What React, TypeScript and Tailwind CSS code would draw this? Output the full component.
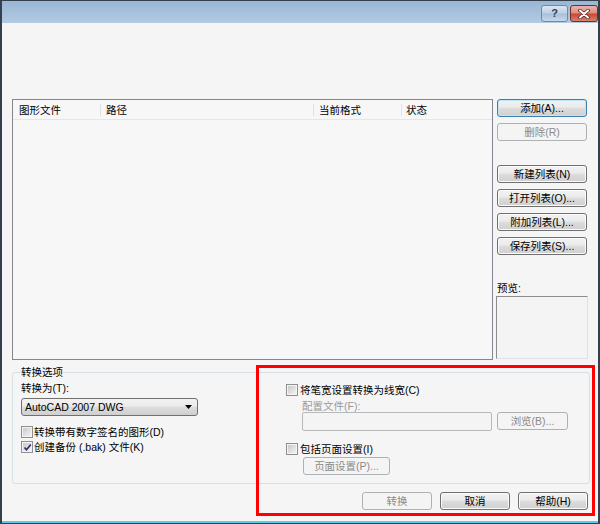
import React from "react";

const btnBase =
  "h-[18px] flex items-center justify-center rounded-[3px] border text-[10.5px] leading-none shrink-0";
const btnOn =
  "border-[#707070] text-black bg-[linear-gradient(#f2f2f2_0%,#ebebeb_45%,#dddddd_50%,#cfcfcf_100%)] shadow-[inset_0_0_0_1px_#fbfbfb]";
const btnDef =
  "border-[#3c7fb1] text-black bg-[linear-gradient(#f2f2f2_0%,#ebebeb_45%,#dddddd_50%,#cfcfcf_100%)] shadow-[inset_0_0_0_1px_#bfe6f7]";
const btnOff = "border-[#adb2b5] text-[#8a8a8a] bg-[#f4f4f4]";

function Btn({
  children,
  kind = "on",
  className = "",
}: {
  children: React.ReactNode;
  kind?: "on" | "def" | "off";
  className?: string;
}) {
  const k = kind === "on" ? btnOn : kind === "def" ? btnDef : btnOff;
  return <div className={`${btnBase} ${k} ${className}`}>{children}</div>;
}

function Check({ checked = false }: { checked?: boolean }) {
  return (
    <span className="w-[12px] h-[12px] border border-[#8e8f8f] bg-[#f4f4f4] flex items-center justify-center shrink-0 relative">
      <span className="w-[8px] h-[8px] bg-[linear-gradient(135deg,#c9c9c9,#f3f3f3)]" />
      {checked && (
        <svg
          className="absolute left-[1px] top-[1px]"
          width="9"
          height="9"
          viewBox="0 0 9 9"
        >
          <path
            d="M1.5 4.5 L3.5 6.8 L7.8 1.5"
            fill="none"
            stroke="#2a2a6a"
            strokeWidth="1.6"
          />
        </svg>
      )}
    </span>
  );
}

export default function App() {
  return (
    <div className="w-[600px] h-[524px] relative overflow-hidden bg-[#f5f5f5] border-l-2 border-r-2 border-t border-b border-[#34404c] flex flex-col font-['Liberation_Sans','Noto_Sans_CJK_SC',sans-serif] text-[10.5px] leading-[12px] text-black">
      {/* title bar */}
      <div className="h-[22px] shrink-0 bg-[linear-gradient(#9ab6d5,#b3cae3)] flex justify-end items-start pt-[4px] pr-[0px] gap-[2px]">
        <div className="w-[27px] h-[17px] rounded-[3px] border border-[#6f8aa6] bg-[linear-gradient(#dce6f2_0%,#bccfe4_48%,#a7bfda_52%,#c6d8ec_100%)] flex items-center justify-center text-[11px] font-bold text-[#2e3e52] leading-none">
          ?
        </div>
        <div className="w-[28px] h-[17px] rounded-[3px] border border-[#6e2f28] bg-[linear-gradient(#ebb3ab_0%,#dd8d80_48%,#c8452f_52%,#d8826d_100%)] flex items-center justify-center">
          <svg width="12" height="10" viewBox="0 0 12 10">
            <path
              d="M2 1.5 L10 8.5 M10 1.5 L2 8.5"
              stroke="#4a2a28"
              strokeWidth="3.6"
              strokeLinecap="round"
            />
            <path
              d="M2 1.5 L10 8.5 M10 1.5 L2 8.5"
              stroke="#ffffff"
              strokeWidth="2"
              strokeLinecap="round"
            />
          </svg>
        </div>
      </div>

      {/* body */}
      <div className="flex-1 flex flex-col pl-[10px]">
        <div className="mt-[76px] flex">
          {/* list */}
          <div className="w-[481px] h-[261px] border border-[#828790] bg-[#f7f7f7] flex flex-col shrink-0">
            <div className="h-[20px] flex items-center border-b border-[#e6e6e6]">
              <div className="w-[87px] pl-[6px]">图形文件</div>
              <div className="w-[1px] h-[12px] bg-[#e2e2e2]" />
              <div className="w-[212px] pl-[5px]">路径</div>
              <div className="w-[1px] h-[12px] bg-[#e2e2e2]" />
              <div className="w-[87px] pl-[5px]">当前格式</div>
              <div className="w-[1px] h-[12px] bg-[#e2e2e2]" />
              <div className="pl-[4px]">状态</div>
            </div>
          </div>

          {/* right column */}
          <div className="ml-[4px] w-[91px] flex flex-col">
            <Btn kind="def" className="w-[90px]">
              添加(A)...
            </Btn>
            <Btn kind="off" className="w-[90px] mt-[6px]">
              删除(R)
            </Btn>
            <Btn className="w-[90px] mt-[24px]">新建列表(N)</Btn>
            <Btn className="w-[90px] mt-[6px]">打开列表(O)...</Btn>
            <Btn className="w-[90px] mt-[6px]">附加列表(L)...</Btn>
            <Btn className="w-[90px] mt-[6px]">保存列表(S)...</Btn>
            <div className="mt-[27px]">预览:</div>
            <div className="mt-[2px] -ml-[1px] w-[92px] h-[63px] border border-t-[#8c8c8c] border-l-[#8c8c8c] border-r-[#e0e0e0] border-b-[#e0e0e0] bg-[#f4f4f4]" />
          </div>
        </div>

        {/* group box */}
        <div className="mt-[12px] w-[578px] h-[112px] relative border border-[#d5dfe5] rounded-[3px] flex">
          <div className="absolute left-[8px] -top-[7px] bg-[#f5f5f5] px-[0px]">
            转换选项
          </div>
          {/* left col */}
          <div className="w-[273px] pl-[8px] flex flex-col">
            <div className="mt-[9px]">转换为(T):</div>
            <div className="mt-[4px] w-[177px] h-[18px] border border-[#707070] rounded-[3px] bg-[linear-gradient(#f2f2f2_0%,#ebebeb_45%,#dddddd_50%,#cfcfcf_100%)] flex items-center justify-between pl-[3px] pr-[5px]">
              <span>AutoCAD 2007 DWG</span>
              <svg width="7" height="4" viewBox="0 0 7 4">
                <path d="M0 0 L7 0 L3.5 4 Z" fill="#000" />
              </svg>
            </div>
            <div className="mt-[9px] h-[13px] flex items-center gap-[1px]">
              <Check />
              <span>转换带有数字签名的图形(D)</span>
            </div>
            <div className="mt-[2px] h-[13px] flex items-center gap-[1px]">
              <Check checked />
              <span>创建备份 (.bak) 文件(K)</span>
            </div>
          </div>
          {/* right col */}
          <div className="flex-1 flex flex-col">
            <div className="mt-[10px] h-[13px] flex items-center gap-[2px]">
              <Check />
              <span>将笔宽设置转换为线宽(C)</span>
            </div>
            <div className="mt-[4px] pl-[16px] text-[#9a9a9a]">配置文件(F):</div>
            <div className="flex items-start pl-[16px]">
              <div className="w-[190px] h-[19px] border border-[#b5b9bc] rounded-[2px] bg-[#f4f4f4]" />
              <Btn kind="off" className="w-[71px] ml-[5px]">
                浏览(B)...
              </Btn>
            </div>
            <div className="mt-[11px] h-[13px] flex items-center gap-[2px]">
              <Check />
              <span>包括页面设置(I)</span>
            </div>
            <div className="mt-[2px] pl-[17px]">
              <Btn kind="off" className="w-[87px]">
                页面设置(P)...
              </Btn>
            </div>
          </div>
        </div>

        {/* bottom buttons */}
        <div className="mt-[8px] w-[578px] flex justify-end gap-[8px] pr-[2px]">
          <Btn kind="off" className="w-[70px]">
            转换
          </Btn>
          <Btn className="w-[70px]">取消</Btn>
          <Btn className="w-[70px]">帮助(H)</Btn>
        </div>
      </div>

      <div className="h-[2px] shrink-0 bg-[#5ccbeb]" />

      {/* red annotation */}
      <div className="absolute left-[254px] top-[364px] w-[339px] h-[151px] border-[3px] border-[#ff0000] pointer-events-none" />
    </div>
  );
}
